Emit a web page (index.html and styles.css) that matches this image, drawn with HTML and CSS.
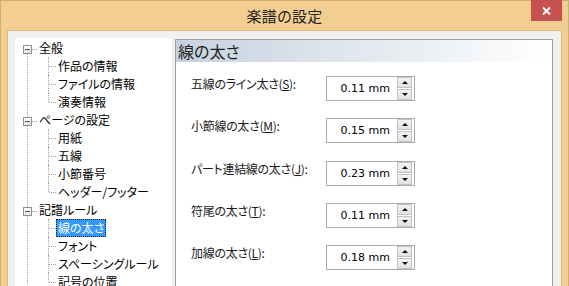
FILE: index.html
```html
<!DOCTYPE html>
<html lang="ja">

<head>
    <meta charset="UTF-8">
    <title>楽譜の設定</title>
    <link rel="stylesheet" href="styles.css">
</head>

<body>
    <div class="window">
        <div class="titlebar">
            <span></span>
            <div class="title">楽譜の設定</div>
            <div class="close">
                <svg width="9" height="8" viewBox="0 0 9 8">
                    <path d="M1 0.5 L8 7.5 M8 0.5 L1 7.5" stroke="#fff" stroke-width="2" fill="none" />
                </svg>
            </div>
        </div>

        <div class="content">
            <ul class="tree">
                <li class="node">
                    <div class="row"><span class="toggle"></span><span class="label">全般</span></div>
                    <ul class="children">
                        <li><span class="label">作品の情報</span></li>
                        <li><span class="label">ファイルの情報</span></li>
                        <li><span class="label">演奏情報</span></li>
                    </ul>
                </li>
                <li class="node">
                    <div class="row"><span class="toggle"></span><span class="label">ページの設定</span></div>
                    <ul class="children">
                        <li><span class="label">用紙</span></li>
                        <li><span class="label">五線</span></li>
                        <li><span class="label">小節番号</span></li>
                        <li><span class="label">ヘッダー/フッター</span></li>
                    </ul>
                </li>
                <li class="node">
                    <div class="row"><span class="toggle"></span><span class="label">記譜ルール</span></div>
                    <ul class="children">
                        <li><span class="label selected">線の太さ</span></li>
                        <li><span class="label">フォント</span></li>
                        <li><span class="label">スペーシングルール</span></li>
                        <li><span class="label">記号の位置</span></li>
                    </ul>
                </li>
            </ul>

            <div class="page">
                <div class="page-title">線の太さ</div>
                <div class="fields">
                    <div class="field">
                        <label>五線のライン太さ(<u>S</u>):</label>
                        <div class="spin"><span class="value">0.11 mm</span><div class="arrows"><span class="up"></span><span class="down"></span></div></div>
                    </div>
                    <div class="field">
                        <label>小節線の太さ(<u>M</u>):</label>
                        <div class="spin"><span class="value">0.15 mm</span><div class="arrows"><span class="up"></span><span class="down"></span></div></div>
                    </div>
                    <div class="field">
                        <label>パート連結線の太さ(<u>J</u>):</label>
                        <div class="spin"><span class="value">0.23 mm</span><div class="arrows"><span class="up"></span><span class="down"></span></div></div>
                    </div>
                    <div class="field">
                        <label>符尾の太さ(<u>T</u>):</label>
                        <div class="spin"><span class="value">0.11 mm</span><div class="arrows"><span class="up"></span><span class="down"></span></div></div>
                    </div>
                    <div class="field">
                        <label>加線の太さ(<u>L</u>):</label>
                        <div class="spin"><span class="value">0.18 mm</span><div class="arrows"><span class="up"></span><span class="down"></span></div></div>
                    </div>
                </div>
            </div>
        </div>
    </div>
</body>

</html>
```

FILE: styles.css
```css
html,
body {
    margin: 0;
    height: 100%;
    overflow: hidden;
}

body {
    font-family: "Noto Sans CJK JP", sans-serif;
    font-feature-settings: "palt";
    color: #000;
}

.window {
    box-sizing: border-box;
    height: 286px;
    display: flex;
    flex-direction: column;
    background-color: #f2cf91;
    border: 1px solid #cfae76;
    border-bottom: none;
    padding: 0 6px;
}

/* title bar */
.titlebar {
    height: 29px;
    flex-shrink: 0;
    display: grid;
    grid-template-columns: 1fr auto 1fr;
    margin: 0 -6px;
}

.title {
    font-size: 15px;
    line-height: 30px;
    color: #222;
    letter-spacing: 0.3px;
}

.close {
    justify-self: end;
    width: 31px;
    height: 21px;
    margin-top: -1px;
    margin-right: 6px;
    background-color: #c75050;
    display: flex;
    align-items: center;
    justify-content: center;
}

.close svg {
    margin-top: 1px;
}

/* dialog body */
.content {
    flex: 1;
    display: flex;
    gap: 3px;
    background-color: #f0f0f0;
    border: 1px solid #d8b77f;
    border-bottom: none;
    padding: 7px 8px 0 7px;
    min-height: 0;
}

ul {
    list-style: none;
    margin: 0;
    padding: 0;
}

.tree {
    width: 157px;
    flex-shrink: 0;
    background-color: #fff;
    padding: 1px 0 0 8px;
    box-sizing: border-box;
    font-size: 12px;
    overflow: hidden;
}

.node {
    position: relative;
}

.node::before {
    content: "";
    position: absolute;
    left: 4px;
    top: 15px;
    bottom: -6px;
    border-left: 1px dotted #a0a0a0;
}

.row {
    display: flex;
    height: 18px;
}

.toggle {
    position: relative;
    z-index: 1;
    box-sizing: border-box;
    width: 9px;
    height: 9px;
    margin-top: 6px;
    margin-right: 5px;
    border: 1px solid #919191;
    background: linear-gradient(#ffffff, #e4e4e4);
}

.toggle::before {
    content: "";
    position: absolute;
    left: 1px;
    top: 3px;
    width: 5px;
    height: 1px;
    background-color: #3c4f74;
}

.toggle::after {
    content: "";
    position: absolute;
    left: 8px;
    top: 3px;
    width: 5px;
    border-top: 1px dotted #a0a0a0;
}

.label {
    box-sizing: border-box;
    display: inline-block;
    height: 18px;
    line-height: 16px;
    padding: 0 1px;
    border: 1px solid transparent;
    white-space: nowrap;
}

.children li {
    position: relative;
    height: 18px;
    padding-left: 33px;
}

.children li::before {
    content: "";
    position: absolute;
    left: 25px;
    top: 0;
    height: 100%;
    border-left: 1px dotted #a0a0a0;
}

.children li:last-child::before {
    height: 9px;
}

.children li::after {
    content: "";
    position: absolute;
    left: 26px;
    top: 9px;
    width: 7px;
    border-top: 1px dotted #a0a0a0;
}

.label.selected {
    background-color: #3399ff;
    color: #fff;
    border: 1px dotted #222;
}

/* settings page */
.page {
    flex: 1;
    margin-top: 1px;
    background-color: #fff;
    border: 1px solid #a0a0a0;
    border-bottom: none;
}

.page-title {
    height: 22px;
    line-height: 22px;
    padding-left: 2px;
    font-size: 16px;
    color: #1e1e1e;
    background: linear-gradient(to right, #c6d2df, #ffffff);
}

.fields {
    display: flex;
    flex-direction: column;
    gap: 17.25px;
    padding: 14px 0 0 15px;
}

.field {
    display: flex;
    align-items: flex-start;
}

.field label {
    width: 135px;
    font-size: 12px;
    line-height: 15px;
    letter-spacing: -0.3px;
    color: #1a1a1a;
}

.field u {
    text-underline-offset: 1px;
}

.spin {
    box-sizing: border-box;
    width: 89px;
    height: 25px;
    border: 1px solid #ababab;
    display: flex;
}

.value {
    flex: 1;
    text-align: right;
    padding-right: 7px;
    font-family: "DejaVu Sans", sans-serif;
    font-size: 11px;
    line-height: 23px;
    color: #000;
}

.arrows {
    width: 15px;
    margin-right: 2px;
    display: flex;
    flex-direction: column;
    gap: 1px;
}

.arrows span {
    flex: 1;
    box-sizing: border-box;
    border: 1px solid #c2c2c2;
    background: linear-gradient(#f2f2f2, #e2e2e2);
    display: flex;
    align-items: center;
    justify-content: center;
}

.arrows span::before {
    content: "";
    width: 0;
    height: 0;
    border-left: 3px solid transparent;
    border-right: 3px solid transparent;
}

.arrows .up::before {
    border-bottom: 3px solid #111;
}

.arrows .down::before {
    border-top: 3px solid #111;
}
```
